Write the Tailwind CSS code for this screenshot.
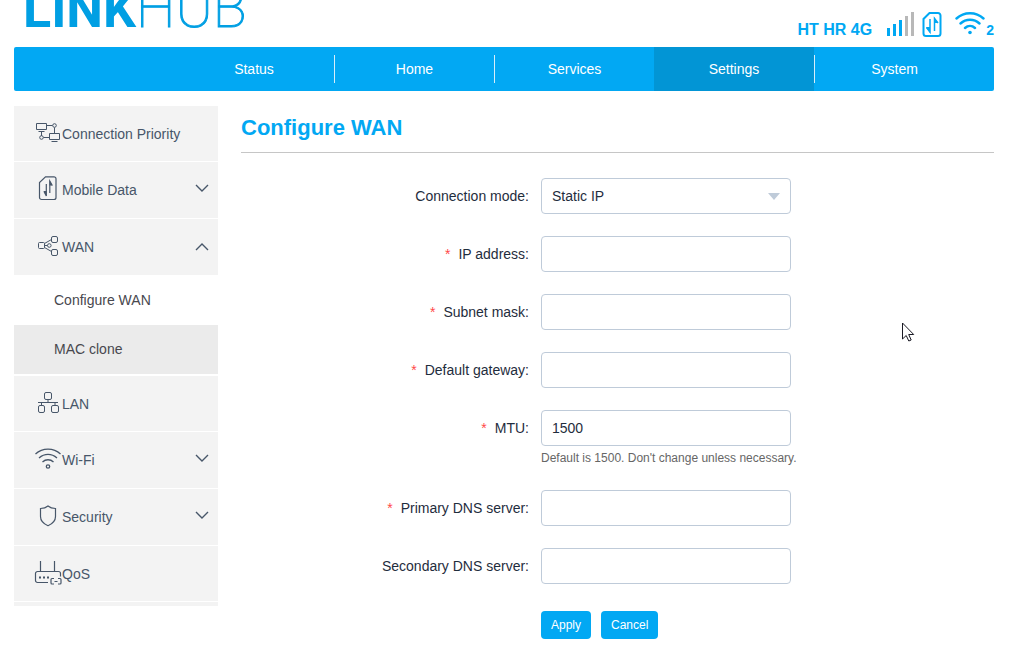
<!DOCTYPE html>
<html lang="en">
<head>
  <meta charset="UTF-8" />
  <meta name="viewport" content="width=device-width, initial-scale=1.0"/>
  <title>LINKHUB - Configure WAN</title>
  <script src="https://cdn.jsdelivr.net/npm/@tailwindcss/browser@4"></script>
</head>
<body class="bg-white pl-[14px] pr-10 font-['Liberation_Sans',Arial,sans-serif] text-sm text-[#1f2d3d]">

  <header class="flex h-[47px] items-end justify-between">
    <a href="#" class="flex items-baseline pb-[13px] pl-[9px] font-[Roboto,sans-serif] text-[52px] leading-[48px] text-[#009fe3]"><span class="font-bold">LINK</span><span class="text-[56px] leading-[48px] font-thin [-webkit-text-stroke:1px]">HUB</span></a>
    <div class="flex items-end pb-[9px] font-bold leading-4 text-[#00a8f3]">
      <span class="mr-[15px] text-base leading-4">HT HR 4G</span>
      <svg class="mr-[7px] h-[26px] w-7" viewBox="0 0 28 26" aria-label="Signal">
        <path fill="#00a8f3" d="M0 16h3v8H0zM6 12h3v12H6zM12 8h3v16h-3z"/>
        <path fill="#b8b8b8" d="M18 4h3v20h-3zM24 0h3v24h-3z"/>
      </svg>
      <svg class="mr-[13px] h-[26px] w-5" viewBox="0 0 20 26" fill="none" stroke="#00a8f3" stroke-width="2" aria-label="SIM">
        <path d="M7.500 1H16a2.500 2.500 0 0 1 2.500 2.500V21.500A2.500 2.500 0 0 1 16 24H4a2.500 2.500 0 0 1-2.500-2.500V7z"/>
        <path stroke-width="1.500" d="M8 7v13L4.500 15.500M12.500 19V6.500L16 11"/>
        <path fill="#00a8f3" stroke="none" d="M4 15h4v6zM12 5l4 6h-4z"/>
      </svg>
      <svg class="h-[26px] w-[30px]" viewBox="0 0 30 26" fill="none" stroke="#00a8f3" stroke-width="2.400" stroke-linecap="round" aria-label="Wi-Fi">
        <path d="M1.500 6.500C9 -0.500 21 -0.500 28.500 6.500M5.500 11.500c5.500-5 13.500-5 19 0M10 16c3-2.800 7-2.800 10 0"/>
        <circle cx="15" cy="20.500" r="1.800" fill="#00a8f3" stroke="none"/>
      </svg>
      <span class="ml-px">2</span>
    </div>
  </header>

  <nav class="flex justify-end rounded-xs bg-[#02a8f3] pr-5 leading-7 text-white">
    <a href="#" class="w-40 py-2 text-center"><span class="block">Status</span></a>
    <a href="#" class="w-40 py-2 text-center"><span class="block border-l border-[#d8eefa]">Home</span></a>
    <a href="#" class="w-40 py-2 text-center"><span class="block border-l border-[#d8eefa]">Services</span></a>
    <a href="#" class="w-40 bg-[#0295d5] py-2 text-center"><span class="block">Settings</span></a>
    <a href="#" class="w-40 py-2 text-center"><span class="block border-l border-[#d8eefa]">System</span></a>
  </nav>

  <div class="flex items-start gap-[23px] pt-[15px]">

    <aside class="w-[204px] shrink-0 bg-[#f3f3f3] pb-1 leading-7 text-[#475669]">
      <a href="#" class="flex border-b border-white pt-[14px] pb-[13px] pl-5">
        <svg class="size-7" viewBox="0 0 28 28" fill="none" stroke="#475669">
          <path d="M2.500 3.500h10v6h-10zM4.500 11.500h6M7.500 12v4M12.500 5.500h6M20.500 7.500v6M9.500 17.500h5.500M15.500 13.500h10v6h-10zM17.500 21.500h6"/>
          <circle cx="20.500" cy="5.500" r="1.800"/><circle cx="7.500" cy="17.500" r="1.800"/>
        </svg>
        <span>Connection Priority</span>
      </a>
      <a href="#" class="flex border-b border-white py-[14px] pr-[9px] pl-5">
        <svg class="size-7" viewBox="0 0 28 28" fill="none" stroke="#475669" stroke-width="1.200">
          <path d="M11.500 .8H20a2 2 0 0 1 2 2V21.500a2 2 0 0 1-2 2H7.500a2 2 0 0 1-2-2V6.500z"/>
          <path d="M12.300 8v12L10 15.500M15.800 17V5L18.300 9.500"/>
          <path fill="#475669" stroke="none" d="M9.500 15h3v5zM15.500 4.500l3 5h-3z"/>
        </svg>
        <span>Mobile Data</span>
        <svg class="mt-[6px] ml-auto h-3 w-[14px]" viewBox="0 0 14 12" fill="none" stroke="#475669" stroke-width="1.400"><path d="M1 3l6 6 6-6"/></svg>
      </a>
      <a href="#" class="flex border-b border-white py-[14px] pr-[9px] pl-5">
        <svg class="size-7" viewBox="0 0 28 28" fill="none" stroke="#475669">
          <rect x="4.500" y="9.500" width="6" height="6" rx="1"/>
          <rect x="17.500" y="3.500" width="6" height="6" rx="1.500"/>
          <rect x="17.500" y="16.500" width="6" height="6" rx="1.500"/>
          <circle cx="15.300" cy="12.500" r="1.800"/>
          <path d="M10.500 10.500l7-4M10.500 14.500l7 4M10.500 12.500h3"/>
        </svg>
        <span>WAN</span>
        <svg class="mt-2 ml-auto h-3 w-[14px]" viewBox="0 0 14 12" fill="none" stroke="#475669" stroke-width="1.400"><path d="M1 9l6-6 6 6"/></svg>
      </a>
      <div class="border-b-2 border-white leading-[49px] text-[#48484e]">
        <a href="#" class="block bg-white pl-10">Configure WAN</a>
        <a href="#" class="block bg-[#ebebeb] pl-10">MAC clone</a>
      </div>
      <a href="#" class="flex border-b border-white pt-[14px] pb-[13px] pl-5">
        <svg class="size-7" viewBox="0 0 28 28" fill="none" stroke="#475669">
          <rect x="10.500" y="2.500" width="7" height="7" rx="1.500"/>
          <rect x="4.500" y="15.500" width="6" height="7" rx="1.500"/>
          <rect x="17.500" y="15.500" width="7" height="7" rx="1.500"/>
          <path d="M14 9.500v3M4 12.500h20M7.500 12.500v3M21 12.500v3"/>
        </svg>
        <span>LAN</span>
      </a>
      <a href="#" class="flex border-b border-white py-[14px] pr-[9px] pl-5">
        <svg class="size-7" viewBox="0 0 28 28" fill="none" stroke="#475669" stroke-width="1.300">
          <path d="M1.500 8c7-6.500 18-6.500 25 0M5 12c5.500-4.800 12.500-4.800 18 0M8.500 16c3.200-3 7.800-3 11 0"/>
          <circle cx="14" cy="20.500" r="1.700"/>
        </svg>
        <span>Wi-Fi</span>
        <svg class="mt-[6px] ml-auto h-3 w-[14px]" viewBox="0 0 14 12" fill="none" stroke="#475669" stroke-width="1.400"><path d="M1 3l6 6 6-6"/></svg>
      </a>
      <a href="#" class="flex border-b border-white py-[14px] pr-[9px] pl-5">
        <svg class="size-7" viewBox="0 0 28 28" fill="none" stroke="#475669" stroke-width="1.200">
          <path d="M14 3c-2 1.800-4.500 2.500-7.500 2.500v8c0 4.500 3.500 7.500 7.500 9.200 4-1.700 7.500-4.700 7.500-9.200v-8c-3 0-5.500-.7-7.500-2.500z"/>
        </svg>
        <span>Security</span>
        <svg class="mt-[6px] ml-auto h-3 w-[14px]" viewBox="0 0 14 12" fill="none" stroke="#475669" stroke-width="1.400"><path d="M1 3l6 6 6-6"/></svg>
      </a>
      <a href="#" class="flex border-b border-white pt-[14px] pb-[13px] pl-5">
        <svg class="size-7" viewBox="0 0 28 28" fill="none" stroke="#475669" stroke-width="1.200">
          <path d="M14 22.500H3.500a2 2 0 0 1-2-2v-7a2 2 0 0 1 2-2h21a2 2 0 0 1 2 2v3M6.500 1v10.500M20.500 1v10.500"/>
          <path stroke-width="2" d="M5 17.500h2M9 17.500h2M13 17.500h2"/>
          <path d="M20 18.500h-2a1 1 0 0 0-1 1v3.500a1 1 0 0 0 1 1h2M24 18.500h2a1 1 0 0 1 1 1v3.500a1 1 0 0 1-1 1h-2M20.500 21.500h3"/>
        </svg>
        <span>QoS</span>
      </a>
    </aside>

    <main class="min-w-0 flex-1">
      <h1 class="border-b border-[#c6c6c6] pt-2 pb-[10px] text-[22px] leading-7 font-bold text-[#02a8f3]">Configure WAN</h1>

      <form class="flex flex-col gap-[22px] pt-[25px]">
        <div class="flex">
          <label for="mode" class="w-[300px] pr-3 text-right leading-9">Connection mode:</label>
          <div class="relative w-[250px]">
            <select id="mode" class="h-9 w-full appearance-none rounded border border-[#bfcbd9] bg-white px-[10px]">
              <option>Static IP</option>
            </select>
            <svg class="pointer-events-none absolute top-[15px] right-[11px] h-[7px] w-3" viewBox="0 0 12 7" fill="#bfcbd9"><path d="M0 0h12L6 7z"/></svg>
          </div>
        </div>
        <div class="flex">
          <label for="ip" class="w-[300px] pr-3 text-right leading-9"><span class="mr-2 text-[#ff4949]">*</span>IP address:</label>
          <input id="ip" type="text" class="h-9 w-[250px] rounded border border-[#bfcbd9] px-[10px]" />
        </div>
        <div class="flex">
          <label for="mask" class="w-[300px] pr-3 text-right leading-9"><span class="mr-2 text-[#ff4949]">*</span>Subnet mask:</label>
          <input id="mask" type="text" class="h-9 w-[250px] rounded border border-[#bfcbd9] px-[10px]" />
        </div>
        <div class="flex">
          <label for="gateway" class="w-[300px] pr-3 text-right leading-9"><span class="mr-2 text-[#ff4949]">*</span>Default gateway:</label>
          <input id="gateway" type="text" class="h-9 w-[250px] rounded border border-[#bfcbd9] px-[10px]" />
        </div>
        <div class="flex">
          <label for="mtu" class="w-[300px] pr-3 text-right leading-9"><span class="mr-2 text-[#ff4949]">*</span>MTU:</label>
          <div>
            <input id="mtu" type="text" value="1500" class="block h-9 w-[250px] rounded border border-[#bfcbd9] px-[10px]" />
            <p class="pt-[3px] pb-px text-xs leading-[18px] text-[#666]">Default is 1500. Don't change unless necessary.</p>
          </div>
        </div>
        <div class="flex">
          <label for="dns1" class="w-[300px] pr-3 text-right leading-9"><span class="mr-2 text-[#ff4949]">*</span>Primary DNS server:</label>
          <input id="dns1" type="text" class="h-9 w-[250px] rounded border border-[#bfcbd9] px-[10px]" />
        </div>
        <div class="flex">
          <label for="dns2" class="w-[300px] pr-3 text-right leading-9">Secondary DNS server:</label>
          <input id="dns2" type="text" class="h-9 w-[250px] rounded border border-[#bfcbd9] px-[10px]" />
        </div>
        <div class="flex gap-[10px] pt-[5px] pl-[300px] text-xs text-white">
          <button type="button" class="h-7 rounded bg-[#02a8f3] px-[10px]">Apply</button>
          <button type="button" class="h-7 rounded bg-[#02a8f3] px-[10px]">Cancel</button>
        </div>
      </form>
    </main>
  </div>

  <!-- mouse pointer -->
  <svg class="pointer-events-none absolute top-[322px] left-[902px] h-5 w-[13px]" viewBox="0 0 13 20" fill="#fff" stroke="#1a1a24"><path d="M.5 1v16l3.700-3.500 2.600 5.500 2.400-1-2.500-5.500h5z"/></svg>
</body>
</html>
